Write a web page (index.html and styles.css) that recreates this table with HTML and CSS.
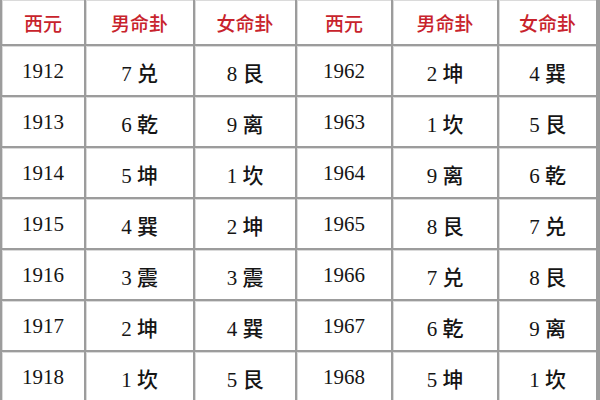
FILE: index.html
```html
<!DOCTYPE html>
<html lang="zh">
<head>
<meta charset="utf-8">
<link rel="stylesheet" href="styles.css">
</head>
<body>
<div class="table">
  <div class="cell head">西元</div>
  <div class="cell head">男命卦</div>
  <div class="cell head">女命卦</div>
  <div class="cell head">西元</div>
  <div class="cell head">男命卦</div>
  <div class="cell head">女命卦</div>

  <div class="cell">1912</div><div class="cell">7 兑</div><div class="cell">8 艮</div>
  <div class="cell">1962</div><div class="cell">2 坤</div><div class="cell">4 巽</div>

  <div class="cell">1913</div><div class="cell">6 乾</div><div class="cell">9 离</div>
  <div class="cell">1963</div><div class="cell">1 坎</div><div class="cell">5 艮</div>

  <div class="cell">1914</div><div class="cell">5 坤</div><div class="cell">1 坎</div>
  <div class="cell">1964</div><div class="cell">9 离</div><div class="cell">6 乾</div>

  <div class="cell">1915</div><div class="cell">4 巽</div><div class="cell">2 坤</div>
  <div class="cell">1965</div><div class="cell">8 艮</div><div class="cell">7 兑</div>

  <div class="cell">1916</div><div class="cell">3 震</div><div class="cell">3 震</div>
  <div class="cell">1966</div><div class="cell">7 兑</div><div class="cell">8 艮</div>

  <div class="cell">1917</div><div class="cell">2 坤</div><div class="cell">4 巽</div>
  <div class="cell">1967</div><div class="cell">6 乾</div><div class="cell">9 离</div>

  <div class="cell">1918</div><div class="cell">1 坎</div><div class="cell">5 艮</div>
  <div class="cell">1968</div><div class="cell">5 坤</div><div class="cell">1 坎</div>
</div>
</body>
</html>
```
FILE: styles.css
```css
html, body {
  margin: 0;
  padding: 0;
  background: #ffffff;
  width: 600px;
  height: 400px;
  overflow: hidden;
}

.table {
  display: grid;
  grid-template-columns: 82px 107px 100px 94px 104px 97px;
  grid-template-rows: 44px repeat(7, 49px);
  gap: 2px;
  padding: 0 2px 0 2px;
  width: 596px;
  background: #9c9c9c;
  margin-right: 2px;
}

.cell {
  background: #ffffff;
  display: flex;
  align-items: center;
  justify-content: center;
  padding-top: 2px;
  font-family: "Liberation Serif", "Noto Sans CJK SC", serif;
  font-size: 21px;
  font-weight: 500;
  color: #151515;
  box-shadow: inset 1px 1px 0 #dadada;
}

.head {
  font-family: "Noto Sans CJK SC", sans-serif;
  font-size: 19px;
  font-weight: 500;
  color: #c8232c;
  padding-top: 0;
}
```
